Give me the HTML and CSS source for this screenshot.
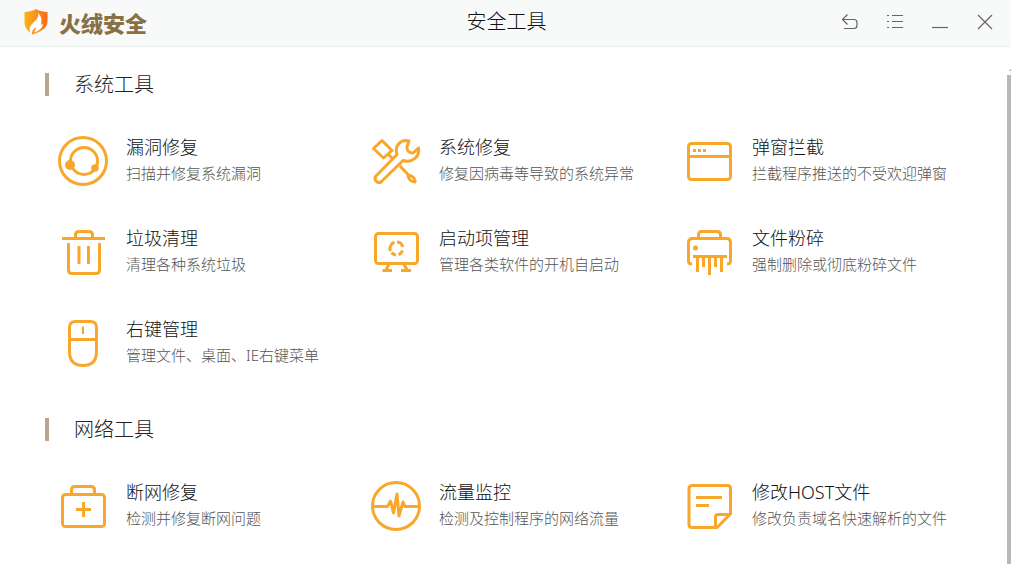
FILE: index.html
```html
<!DOCTYPE html>
<html lang="zh-CN">
<head>
<meta charset="utf-8">
<meta name="viewport" content="width=device-width, initial-scale=1">
<title>安全工具</title>
<link rel="stylesheet" href="styles.css">
</head>
<body>
<header class="titlebar">
  <div class="brand">
    <svg class="brand-mark" viewBox="0 0 24 26" aria-hidden="true">
      <defs>
        <linearGradient id="shield" x1="0" y1="0" x2="1" y2="0">
          <stop offset="0" stop-color="#fdb01c"/><stop offset=".5" stop-color="#fb921a"/><stop offset="1" stop-color="#f76a10"/>
        </linearGradient>
      </defs>
      <path fill="url(#shield)" d="M12 0C8 2.300 4 3 .5 3v10c0 6 4 9.500 8 12.500C19 22 23.500 18 23.500 12V3C20 3 16 2.300 12 0z"/>
      <path fill="#fff" d="M14 4c.8 4-1 6-4 9-2.500 2.500-4.500 4.500-4.500 7.500 0 2 1 3.800 2.500 5C7.500 22.500 9 20.500 11.500 18c.3 2-.5 4-1.500 5.500 5-1.500 8.500-4 9-9-.8.800-1.500 1.200-2.300 1.300C18.500 11.500 17.500 7 14 4z"/>
    </svg>
    <span class="brand-name">火绒安全</span>
  </div>
  <h1 class="window-title">安全工具</h1>
  <div class="window-controls">
    <button class="control" type="button" aria-label="返回"><svg viewBox="0 0 18 18"><path d="M6.500 1.500l-5 5 5 5M1.500 6.500H13q3 0 3 3v3q0 3-3 3H3"/></svg></button>
    <button class="control" type="button" aria-label="菜单"><svg viewBox="0 0 18 18"><path d="M1 2.500h2M6 2.500h11M1 8.500h2M6 8.500h11M1 14.500h2M6 14.500h11"/></svg></button>
    <button class="control" type="button" aria-label="最小化"><svg viewBox="0 0 18 18"><path d="M1 14.500h16"/></svg></button>
    <button class="control" type="button" aria-label="关闭"><svg viewBox="0 0 18 18"><path d="M2 2l14 14M16 2L2 16"/></svg></button>
  </div>
</header>
<div class="body">
  <main class="content">
    <section class="group">
      <h2 class="group-title">系统工具</h2>
      <div class="tools">
        <button class="tool" type="button">
          <svg class="icon" viewBox="0 0 50 50"><circle cx="25" cy="25" r="23.500"/><circle cx="26" cy="25" r="13.500"/><circle class="solid" cx="12" cy="29" r="5"/><circle class="solid" cx="37" cy="32" r="3.800"/></svg>
          <span class="label"><span class="name">漏洞修复</span><span class="desc">扫描并修复系统漏洞</span></span>
        </button>
        <button class="tool" type="button">
          <svg class="icon" viewBox="0 0 50 50"><path d="M2.500 12.500L11 4.500l10 10-8.500 7.500zM17 18l5 5M29 30l9 9.500M37 39c3 0 8 3.500 7 7-4 0-7-3-7-7zM38 5C30 2.500 23 9.500 26 18.500L5 40c-3 4 2 8.500 5.500 5.500L32 24.500c9 3 17-4 15.500-12.500L42 17c-4 0-6.500-2.500-6-6.500z"/></svg>
          <span class="label"><span class="name">系统修复</span><span class="desc">修复因病毒等导致的系统异常</span></span>
        </button>
        <button class="tool" type="button">
          <svg class="icon" viewBox="0 0 50 50"><rect x="4.500" y="7.500" width="42" height="36" rx="3"/><path d="M4.500 20.500h42"/><path class="solid-small" d="M9 13h3v3H9zM14 13h3v3h-3zM19 13h3v3h-3z"/></svg>
          <span class="label"><span class="name">弹窗拦截</span><span class="desc">拦截程序推送的不受欢迎弹窗</span></span>
        </button>
        <button class="tool" type="button">
          <svg class="icon" viewBox="0 0 50 50"><path d="M4 11.500h43M17.500 11V8q0-3.500 3.500-3.500h10q3.500 0 3.500 3.500v3M10.500 16v27q0 3.500 3.500 3.500h24q3.500 0 3.500-3.500V16M21 19v18M30.500 19v18"/></svg>
          <span class="label"><span class="name">垃圾清理</span><span class="desc">清理各种系统垃圾</span></span>
        </button>
        <button class="tool" type="button">
          <svg class="icon" viewBox="0 0 50 50"><rect x="4.500" y="6.500" width="42" height="30" rx="3"/><path d="M19.500 24A6.500 6.500 0 0 1 23.500 15.300M26 15A6.500 6.500 0 0 1 31.800 20M31.500 23.500A6.500 6.500 0 0 1 27.500 27.700M25 28A6.500 6.500 0 0 1 20.500 25.500"/><path d="M18 37l-3 6M33 37l3 6M11.500 43.500H21M30 43.500h10"/></svg>
          <span class="label"><span class="name">启动项管理</span><span class="desc">管理各类软件的开机自启动</span></span>
        </button>
        <button class="tool" type="button">
          <svg class="icon" viewBox="0 0 50 50"><path d="M14.500 11V8q0-3.500 3.500-3.500h15q3.500 0 3.500 3.500v3M8 37q-3.500 0-3.500-3V15.500q0-4 4-4h34q4 0 4 4V34q0 3-3.500 3M9 29.500h34M13.500 30v15M19.500 30v10M25.500 30v18M31.500 30v10M37.500 30v15"/><circle class="solid" cx="11.500" cy="21" r="2.500"/></svg>
          <span class="label"><span class="name">文件粉碎</span><span class="desc">强制删除或彻底粉碎文件</span></span>
        </button>
        <button class="tool" type="button">
          <svg class="icon" viewBox="0 0 50 50"><path d="M17.500 3.500h15q6 0 6 6v24q0 14-13.500 14t-13.500-14v-24q0-6 6-6zM11.500 21.500h27"/><path class="thin" d="M25 8.500V16"/></svg>
          <span class="label"><span class="name">右键管理</span><span class="desc">管理文件、桌面、IE右键菜单</span></span>
        </button>
      </div>
    </section>
    <section class="group">
      <h2 class="group-title">网络工具</h2>
      <div class="tools">
        <button class="tool" type="button">
          <svg class="icon" viewBox="0 0 50 50"><rect x="4.500" y="13.500" width="42" height="32" rx="3"/><path d="M13.500 13V9q0-3.500 3.500-3.500h16q3.500 0 3.500 3.500v4M25.500 21v15M18 28.500h15"/></svg>
          <span class="label"><span class="name">断网修复</span><span class="desc">检测并修复断网问题</span></span>
        </button>
        <button class="tool" type="button">
          <svg class="icon" viewBox="0 0 50 50"><circle cx="25" cy="25" r="23.500"/><path d="M2 25.500h14.500l3-5.500 3 12 3.500-19 2 22 4-14 2 4.500H48"/></svg>
          <span class="label"><span class="name">流量监控</span><span class="desc">检测及控制程序的网络流量</span></span>
        </button>
        <button class="tool" type="button">
          <svg class="icon" viewBox="0 0 50 50"><path d="M31 46.500H8q-3 0-3-3v-36q0-3 3-3h35.500q3 0 3 3V33L33 46.500zM31.500 46V36q0-2.500 2.500-2.500h12M12 16.500h26M12 24.500h13"/></svg>
          <span class="label"><span class="name">修改HOST文件</span><span class="desc">修改负责域名快速解析的文件</span></span>
        </button>
      </div>
    </section>
  </main>
  <div class="scrollbar" aria-hidden="true"><span class="scroll-arrow"></span><span class="scroll-thumb"></span></div>
</div>
</body>
</html>
```

FILE: styles.css
```css
* { box-sizing: border-box; }

body {
  margin: 0;
  height: 100vh;
  display: flex;
  flex-direction: column;
  overflow: hidden;
  background: #fff;
  color: #222;
  font-family: "Noto Sans", "Noto Sans CJK SC", sans-serif;
  font-weight: 300;
}

button {
  margin: 0;
  padding: 0;
  border: 0;
  background: none;
  color: inherit;
  font: inherit;
  cursor: pointer;
}

.titlebar {
  flex: none;
  display: grid;
  grid-template-columns: 1fr auto 1fr;
  align-items: center;
  height: 47px;
  padding: 0 17px 2px 24px;
  background: #f8faf9;
  border-bottom: 1px solid #e9eeee;
}

.brand {
  display: flex;
  align-items: center;
  gap: 11px;
}

.brand-mark {
  width: 24px;
  height: 26px;
}

.brand-name {
  color: #8a7145;
  font-family: "Noto Sans CJK SC", sans-serif;
  font-size: 22px;
  font-weight: 900;
  line-height: 26px;
}

.window-title {
  margin: 0;
  padding-right: 5px;
  color: #111;
  font-size: 20px;
  font-weight: 300;
  line-height: 28px;
}

.window-controls {
  display: flex;
  justify-content: flex-end;
  gap: 27px;
}

.control {
  width: 18px;
  height: 18px;
}

.control svg {
  display: block;
  fill: none;
  stroke: #666;
  stroke-width: 1.2;
}

.body {
  flex: 1;
  min-height: 0;
  display: flex;
}

.content {
  flex: 1;
  padding: 26px 10px 0 45px;
}

.group { margin-bottom: 30px; }

.group-title {
  margin: 0 0 19px;
  padding-left: 25px;
  border-left: 4px solid #bca58c;
  font-size: 20px;
  font-weight: 300;
  line-height: 23px;
}

.tools {
  display: grid;
  grid-template-columns: repeat(3, 1fr);
  padding-left: 13px;
}

.tool {
  display: flex;
  align-items: center;
  gap: 18px;
  height: 91px;
  text-align: left;
}

.icon {
  flex: none;
  width: 50px;
  height: 50px;
  fill: none;
  stroke: #f9a72b;
  stroke-width: 3;
  stroke-linejoin: round;
}

.icon .solid,
.icon .solid-small {
  fill: #f9a72b;
  stroke: none;
}

.icon .thin { stroke-width: 2; }

.label {
  display: flex;
  flex-direction: column;
  padding-bottom: 2px;
}

.name {
  color: #111;
  font-size: 18px;
  line-height: 26px;
}

.desc {
  color: #555;
  font-size: 15px;
  line-height: 26px;
}

.scrollbar {
  flex: none;
  width: 4px;
  display: flex;
  flex-direction: column;
  align-items: flex-end;
  padding-top: 22px;
}

.scroll-arrow {
  border-bottom: 2px solid #999;
  border-left: 2px solid transparent;
}

.scroll-thumb {
  flex: 1;
  width: 4px;
  margin-top: 4px;
  background: #b8b8b8;
}
```
